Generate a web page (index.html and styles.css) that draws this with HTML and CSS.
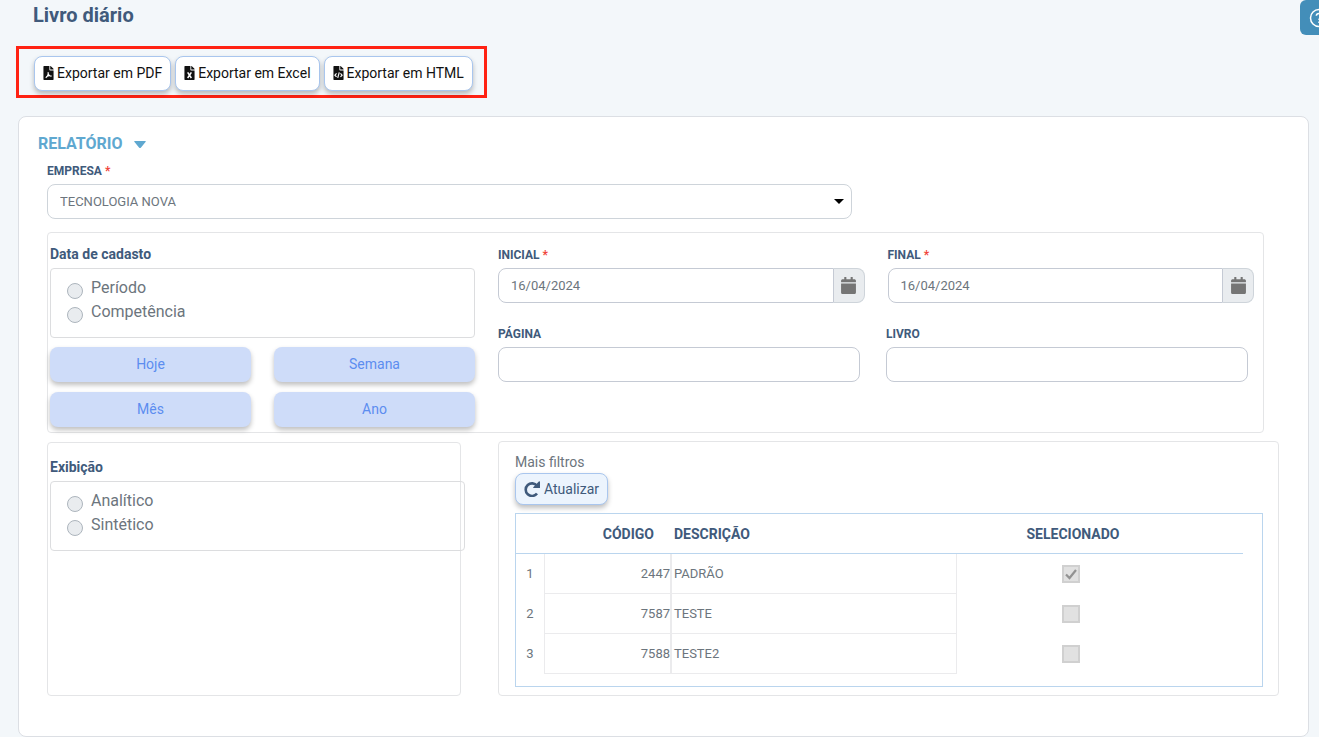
FILE: index.html
```html
<!DOCTYPE html>
<html lang="pt-BR">
<head>
<meta charset="utf-8">
<meta name="viewport" content="width=device-width, initial-scale=1">
<title>Livro diário</title>
<link rel="stylesheet" href="styles.css">
</head>
<body>
<svg class="sprite" aria-hidden="true">
  <symbol id="file" viewBox="0 0 384 512">
    <path d="M224 136V0H24C10.700 0 0 10.700 0 24v464c0 13.300 10.700 24 24 24h336c13.300 0 24-10.700 24-24V160H248c-13.200 0-24-10.800-24-24zM384 122v6H256V0h6c6.400 0 12.500 2.500 17 7l98 98c4.500 4.500 7 10.600 7 17z"/>
  </symbol>
  <symbol id="calendar" viewBox="0 0 448 512">
    <path d="M12 192h424c6.600 0 12 5.400 12 12v260c0 26.500-21.500 48-48 48H48c-26.500 0-48-21.500-48-48V204c0-6.600 5.400-12 12-12zm436-44v-36c0-26.500-21.500-48-48-48h-48V12c0-6.600-5.400-12-12-12h-40c-6.600 0-12 5.400-12 12v52H160V12c0-6.600-5.400-12-12-12h-40c-6.600 0-12 5.400-12 12v52H48C21.500 64 0 85.500 0 112v36c0 6.600 5.400 12 12 12h424c6.600 0 12-5.400 12-12z"/>
  </symbol>
</svg>
<header class="page-header">
  <h1 class="page-title">Livro diário</h1>
  <button class="help" type="button" aria-label="Ajuda">
    <svg viewBox="0 0 20 20" width="20" height="20"><circle cx="10" cy="10" r="8.500"/><path d="M7.300 7.800C7.500 4.600 12.700 4.600 12.700 7.800C12.700 9.800 10 9.800 10 12M10 13.500v1.500"/></svg>
  </button>
</header>
<main>
  <div class="exports">
    <button class="btn btn-export" type="button"><svg class="file-icon" viewBox="0 0 384 512"><use href="#file"/><path class="mark" d="M90 430C150 390 190 300 176 225M176 225C180 320 230 370 305 375M115 385C180 350 240 345 305 370"/></svg>Exportar em PDF</button>
    <button class="btn btn-export" type="button"><svg class="file-icon" viewBox="0 0 384 512"><use href="#file"/><path class="mark mark-bold" d="M125 235L260 440M260 235L125 440"/></svg>Exportar em Excel</button>
    <button class="btn btn-export" type="button"><svg class="file-icon" viewBox="0 0 384 512"><use href="#file"/><path class="mark" d="M120 270L60 335L120 400M264 270L324 335L264 400M220 235L164 435"/></svg>Exportar em HTML</button>
  </div>

  <section class="card">
    <h2 class="section-title">RELATÓRIO <svg viewBox="0 0 12 7" width="12" height="7"><path d="M1 0h10q1.500 0 .5 1L7 6.500q-1 1-2 0L.5 1Q-.5 0 1 0z"/></svg></h2>
    <div class="field company">
      <label class="label" for="empresa">EMPRESA <span class="required">*</span></label>
      <select class="input select" id="empresa"><option>TECNOLOGIA NOVA</option></select>
    </div>

    <div class="panel period">
      <div class="period-side">
        <h3 class="group-title" id="cadastro">Data de cadasto</h3>
        <div class="radios" role="radiogroup" aria-labelledby="cadastro">
          <label class="radio"><input type="radio" name="data">Período</label>
          <label class="radio"><input type="radio" name="data">Competência</label>
        </div>
        <div class="quick">
          <button class="btn btn-quick" type="button">Hoje</button>
          <button class="btn btn-quick" type="button">Semana</button>
          <button class="btn btn-quick" type="button">Mês</button>
          <button class="btn btn-quick" type="button">Ano</button>
        </div>
      </div>
      <div class="period-fields">
        <div class="dates">
          <div class="field">
            <label class="label" for="inicial">INICIAL <span class="required">*</span></label>
            <div class="input-group"><input class="input" id="inicial" type="text" value="16/04/2024"><button class="addon" type="button" aria-label="Abrir calendário"><svg viewBox="0 0 448 512" width="15" height="17"><use href="#calendar"/></svg></button></div>
          </div>
          <div class="field">
            <label class="label" for="final">FINAL <span class="required">*</span></label>
            <div class="input-group"><input class="input" id="final" type="text" value="16/04/2024"><button class="addon" type="button" aria-label="Abrir calendário"><svg viewBox="0 0 448 512" width="15" height="17"><use href="#calendar"/></svg></button></div>
          </div>
        </div>
        <div class="pages">
          <div class="field">
            <label class="label" for="pagina">PÁGINA</label>
            <input class="input" id="pagina" type="text">
          </div>
          <div class="field">
            <label class="label" for="livro">LIVRO</label>
            <input class="input" id="livro" type="text">
          </div>
        </div>
      </div>
    </div>

    <div class="lower">
      <div class="panel display">
        <h3 class="group-title" id="exibicao">Exibição</h3>
        <div class="radios radios-wide" role="radiogroup" aria-labelledby="exibicao">
          <label class="radio"><input type="radio" name="exibicao">Analítico</label>
          <label class="radio"><input type="radio" name="exibicao">Sintético</label>
        </div>
      </div>
      <div class="panel filters">
        <p class="filters-title">Mais filtros</p>
        <button class="btn btn-refresh" type="button"><svg viewBox="0 0 16 16" width="16" height="16"><path class="arc" d="M13 4.800A6.300 6.300 0 1 0 13 12.500"/><path d="M14.800.5q1.200-.6 1.200.5v6H9.800q-1.200 0-.3-1z"/></svg>Atualizar</button>
        <div class="grid-frame">
          <table class="grid">
            <colgroup><col class="col-index"><col class="col-code"><col class="col-desc"><col class="col-check"><col></colgroup>
            <thead>
              <tr><th></th><th class="code">CÓDIGO</th><th class="desc">DESCRIÇÃO</th><th class="check">SELECIONADO</th><th></th></tr>
            </thead>
            <tbody>
              <tr><td class="index">1</td><td class="code">2447</td><td class="desc">PADRÃO</td><td class="check"><input type="checkbox" aria-label="PADRÃO" checked disabled></td><td></td></tr>
              <tr><td class="index">2</td><td class="code">7587</td><td class="desc">TESTE</td><td class="check"><input type="checkbox" aria-label="TESTE" disabled></td><td></td></tr>
              <tr><td class="index">3</td><td class="code">7588</td><td class="desc">TESTE2</td><td class="check"><input type="checkbox" aria-label="TESTE2" disabled></td><td></td></tr>
            </tbody>
          </table>
        </div>
      </div>
    </div>
  </section>
</main>
</body>
</html>
```
FILE: styles.css
```css
* { box-sizing: border-box; }

body {
  margin: 0;
  background: #f3f7fa;
  color: #6c757d;
  font: 14px/18px Roboto, "Liberation Sans", sans-serif;
}

h1, h2, h3, p { margin: 0; }
button, input, select { font: inherit; }
.sprite { display: none; }

.page-header {
  position: relative;
  height: 46px;
  padding-left: 33px;
  overflow: hidden;
}

.page-title {
  color: #405a7b;
  font-size: 20px;
  font-weight: 700;
  line-height: 30px;
}

.help {
  position: absolute;
  top: 0;
  right: -20px;
  width: 39px;
  height: 35px;
  padding: 0 9px;
  border: 0;
  border-radius: 6px;
  background: #438eb9;
}

.help svg {
  display: block;
  fill: none;
  stroke: #fff;
  stroke-width: 1.5;
}

.exports {
  display: flex;
  gap: 4px;
  width: fit-content;
  margin-left: 16px;
  padding: 7px 11px 4px 15px;
  border: 3px solid #ff2213;
}

.btn {
  border-radius: 8px;
  cursor: pointer;
  box-shadow: 0 3px 5px rgba(0, 0, 0, 0.25);
}

.btn-export {
  display: flex;
  align-items: center;
  gap: 3px;
  height: 35px;
  padding: 0 8px 2px;
  border: 1px solid #a9c6ee;
  background: #fff;
  color: #111;
}

.file-icon {
  width: 11px;
  height: 14px;
  fill: #111;
}

.mark {
  fill: none;
  stroke: #fff;
  stroke-width: 42;
}

.mark-bold { stroke-width: 56; }

.card {
  margin: 18px 10px 0 18px;
  padding: 15px 29px 40px 28px;
  border: 1px solid #dcdfe4;
  border-radius: 8px;
  background: #fff;
}

.section-title {
  display: flex;
  align-items: center;
  gap: 11px;
  margin: 0 0 6px -9px;
  color: #5fa8d0;
  font-size: 16px;
  font-weight: 700;
  line-height: 24px;
}

.section-title svg { fill: #5fa8d0; }

.label {
  display: block;
  margin-bottom: 4px;
  color: #405a7b;
  font-size: 12px;
  font-weight: 700;
}

.required { color: #f0443a; }

.company {
  width: 65.35%;
  margin-bottom: 13px;
}

.input {
  display: block;
  width: 100%;
  min-width: 0;
  height: 35px;
  padding: 0 12px;
  border: 1px solid #c5cad4;
  border-radius: 8px;
  background: #fff;
  color: #6c757d;
  font-size: 13px;
}

.select {
  appearance: none;
  border-color: #ced4da;
  background: #fff url("data:image/svg+xml,%3Csvg xmlns='http://www.w3.org/2000/svg' viewBox='0 0 10 5'%3E%3Cpath d='M0 0h10L5 5z'/%3E%3C/svg%3E") no-repeat right 7px center / 10px 5px;
}

.panel {
  border: 1px solid #e4e5e7;
  border-radius: 4px;
}

.period {
  display: grid;
  grid-template-columns: 425fr 765fr;
  gap: 23px;
  margin-right: 15px;
  padding: 12px 0 5px 2px;
}

.group-title {
  margin-bottom: 5px;
  color: #405a7b;
  font-size: 14px;
  font-weight: 700;
}

.radios {
  height: 70px;
  padding: 7px 16px;
  border: 1px solid #dcdddf;
  border-radius: 4px;
}

.radio {
  display: flex;
  gap: 8px;
  height: 24px;
  font-size: 16px;
  line-height: 24px;
}

.radio input {
  appearance: none;
  width: 16px;
  height: 16px;
  margin: 7px 0 0;
  border: 1px solid #adb5bd;
  border-radius: 50%;
  background: #e9ecef;
}

.quick {
  display: grid;
  grid-template-columns: 1fr 1fr;
  gap: 10px 23px;
  margin-top: 9px;
}

.btn-quick {
  height: 35px;
  padding: 0 0 2px;
  border: 0;
  background: #cedcf9;
  color: #5c8df0;
}

.dates, .pages {
  display: grid;
  grid-template-columns: 1fr 1fr;
}

.dates {
  gap: 23px;
  margin-bottom: 22px;
  padding-right: 9px;
}

.pages {
  gap: 26px;
  padding-right: 15px;
}

.period-fields {
  min-width: 0;
  padding-top: 1px;
}

.input-group { display: flex; }
.input-group .input { border-radius: 8px 0 0 8px; }

.addon {
  display: flex;
  flex: 0 0 31px;
  align-items: center;
  justify-content: center;
  padding: 0;
  border: 1px solid #ced4da;
  border-left: 0;
  border-radius: 0 8px 8px 0;
  background: #e9ecef;
  fill: #757575;
}

.lower {
  display: grid;
  grid-template-columns: 414fr 781fr;
  gap: 37px;
  margin-top: 8px;
}

.display {
  margin-top: 1px;
  padding: 15px 0 0 2px;
}

.radios-wide { margin-right: -5px; }

.filters { padding: 9px 15px 8px 16px; }
.filters-title { line-height: 22px; }

.btn-refresh {
  display: flex;
  align-items: center;
  gap: 4px;
  height: 32px;
  margin-bottom: 8px;
  padding: 0 8px;
  border: 1px solid #a9c6ee;
  background: #ecf4fd;
  color: #405a7b;
  fill: #405a7b;
}

.arc {
  fill: none;
  stroke: #405a7b;
  stroke-width: 2.6;
}

.grid-frame {
  padding: 0 19px 12px 0;
  border: 1px solid #bad5ee;
}

.grid {
  width: 100%;
  table-layout: fixed;
  border-collapse: separate;
  border-spacing: 0;
  font-size: 13px;
}

.col-index { width: 28px; }
.col-code { width: 127px; }
.col-desc { width: 286px; }
.col-check { width: 228px; }

.grid th, .grid td {
  height: 40px;
  padding: 0;
}

.grid th {
  border-bottom: 1px solid #bad5ee;
  color: #405a7b;
  font-size: 14px;
  font-weight: 700;
}

.index { text-align: center; }
.code { text-align: right; }
.desc { text-align: left; }
.check { text-align: center; }
.grid th.code { padding-right: 17px; }
.grid .desc { padding-left: 3px; }
.grid th.check { padding-left: 4px; }

.grid td.code, .grid td.desc {
  border: solid #ebebed;
  border-width: 0 1px 1px;
}

.grid td.desc { padding-left: 2px; }

.check input {
  appearance: none;
  display: block;
  width: 18px;
  height: 18px;
  margin: 0 auto;
  border: 2px solid #d0d0d0;
  background: #e1e1e1;
}

.check input:checked {
  background: #e1e1e1 url("data:image/svg+xml,%3Csvg xmlns='http://www.w3.org/2000/svg' viewBox='0 0 14 14'%3E%3Cpath d='M2 7.500L5.500 11L12 3' fill='none' stroke='%23929292' stroke-width='2.200'/%3E%3C/svg%3E") center / 14px 14px no-repeat;
}
```
